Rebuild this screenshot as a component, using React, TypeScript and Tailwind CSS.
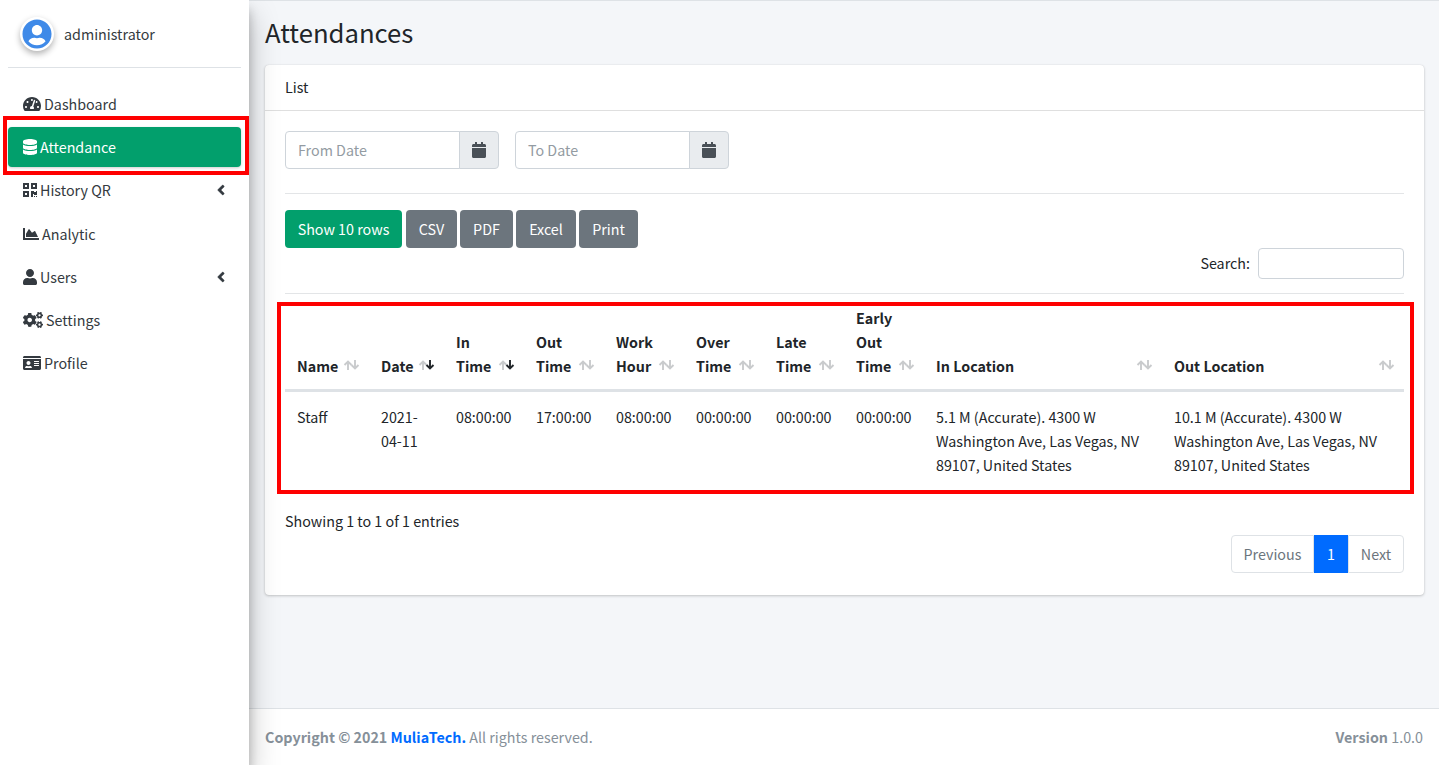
import React from "react";
import { FaTachometerAlt, FaDatabase, FaQrcode, FaChartArea, FaUser, FaCogs, FaIdCard, FaAngleLeft, FaCalendar, FaUserCircle } from "react-icons/fa";

const nav = [
  { label: "Dashboard", icon: FaTachometerAlt, w: "w-[18px]" },
  { label: "Attendance", icon: FaDatabase, active: true, w: "w-[14px]" },
  { label: "History QR", icon: FaQrcode, caret: true, w: "w-[14px]" },
  { label: "Analytic", icon: FaChartArea, w: "w-[16px]" },
  { label: "Users", icon: FaUser, caret: true, w: "w-[14px]" },
  { label: "Settings", icon: FaCogs, w: "w-[20px]" },
  { label: "Profile", icon: FaIdCard, w: "w-[18px]" },
];

const cols = [
  { l: ["Name"], w: "w-[84px]" },
  { l: ["Date"], w: "w-[75px]", sort: true },
  { l: ["In", "Time"], w: "w-[80px]", sort: true },
  { l: ["Out", "Time"], w: "w-[80px]" },
  { l: ["Work", "Hour"], w: "w-[80px]" },
  { l: ["Over", "Time"], w: "w-[80px]" },
  { l: ["Late", "Time"], w: "w-[80px]" },
  { l: ["Early", "Out", "Time"], w: "w-[80px]" },
  { l: ["In Location"], w: "w-[238px]" },
  { l: ["Out Location"], w: "w-[242px]" },
];

const row = [
  "Staff", "2021-04-11", "08:00:00", "17:00:00", "08:00:00", "00:00:00", "00:00:00", "00:00:00",
  "5.1 M (Accurate). 4300 W Washington Ave, Las Vegas, NV 89107, United States",
  "10.1 M (Accurate). 4300 W Washington Ave, Las Vegas, NV 89107, United States",
];

const buttons = [
  { l: "CSV", w: "w-[51px]" },
  { l: "PDF", w: "w-[53px]" },
  { l: "Excel", w: "w-[60px]" },
  { l: "Print", w: "w-[59px]" },
];

function SortArrows({ active }: { active?: boolean }) {
  return (
    <svg viewBox="0 0 17 10" className="absolute right-[9px] bottom-[19px] w-[17px] h-[10px]" fill="none" strokeWidth="1.9">
      <path d="M5 10V1.5M1.5 5L5 1.5L8.5 5" stroke="#c9cbcd" />
      <path d="M12 0V8.5M8.5 5L12 8.5L15.5 5" stroke={active ? "#212529" : "#c9cbcd"} />
    </svg>
  );
}

function DateInput({ ph }: { ph: string }) {
  return (
    <div className="flex w-[214px] h-[38px]">
      <div className="flex-1 flex items-center pl-3 bg-white border border-[#ced4da] rounded-l text-[#939ba2]">{ph}</div>
      <div className="w-[40px] -ml-px flex items-center justify-center bg-[#e9ecef] border border-[#ced4da] rounded-r text-[#495057]">
        <FaCalendar className="w-[14px] h-[16px]" />
      </div>
    </div>
  );
}

export default function App() {
  return (
    <div className="relative flex h-[765px] w-[1439px] overflow-hidden bg-[#f4f6f9] text-[#212529] text-[14.3px] leading-6 font-['Noto_Sans_CJK_SC','Source_Sans_Pro',sans-serif]">
      <aside className="w-[249px] shrink-0 h-full bg-white shadow-[0_14px_28px_rgba(0,0,0,0.25),0_10px_10px_rgba(0,0,0,0.22)] z-10 px-2">
        <div className="flex items-center h-[68px] border-b border-[#dee2e6] pl-[12px]">
          <div className="w-[34px] h-[34px] rounded-full bg-white shadow-[0_3px_6px_rgba(0,0,0,0.3)] flex items-center justify-center">
            <FaUserCircle className="w-[30px] h-[30px] text-[#3f8ae8]" />
          </div>
          <span className="ml-[10px] text-[#343a40]">administrator</span>
        </div>
        <nav className="pt-[16px] flex flex-col gap-[3.2px]">
          {nav.map((n) => {
            const Icon = n.icon;
            return (
              <div
                key={n.label}
                className={
                  n.active
                    ? "relative flex items-center h-[40px] pl-[15px] rounded bg-[#029f6c] text-white shadow-[0_1px_3px_rgba(0,0,0,0.2)]"
                    : "relative flex items-center h-[40px] pl-[15px] text-[#343a40]"
                }
              >
                <Icon className={`${n.w} h-[16px] mr-[3px]`} />
                <span>{n.label}</span>
                {n.caret && <FaAngleLeft stroke="currentColor" strokeWidth={12} className="absolute right-[15px] top-[12px] w-[10px] h-[16px]" />}
              </div>
            );
          })}
        </nav>
      </aside>

      <div className="flex-1 flex flex-col min-w-0 border-t border-[#dee2e6]">
        <main className="flex-1 pl-[16px] pr-[15px]">
          <h1 className="text-[25.7px] leading-[34px] font-normal h-[64px] pt-[14px]">Attendances</h1>
          <section className="bg-white rounded shadow-[0_0_1px_rgba(0,0,0,0.13),0_1px_3px_rgba(0,0,0,0.2)]">
            <header className="h-[46px] px-5 pb-[2px] flex items-center border-b border-[#dfdfdf]">List</header>
            <div className="px-5 pt-5 pb-[22px]">
              <div className="flex gap-4">
                <DateInput ph="From Date" />
                <DateInput ph="To Date" />
              </div>
              <hr className="mt-6 mb-4 border-[#e3e5e7]" />
              <div className="flex gap-[3px] text-white">
                <button className="h-[38px] w-[117px] rounded bg-[#029f6c] mr-[1px]">Show 10 rows</button>
                {buttons.map((b) => (
                  <button key={b.l} className={`h-[38px] ${b.w} rounded bg-[#6c757d]`}>{b.l}</button>
                ))}
              </div>
              <div className="flex justify-end items-center h-[31px]">
                <span className="mr-[8px] pb-[2px]">Search:</span>
                <div className="w-[146px] h-[31px] bg-white border border-[#ced4da] rounded" />
              </div>
              <hr className="mt-[14px] border-[#e3e5e7]" />
              <table className="table-fixed w-full mt-[12px] border-collapse">
                <thead>
                  <tr className="border-b-[3px] border-[#dee2e6]">
                    {cols.map((c) => (
                      <th key={c.l.join()} className={`${c.w} relative align-bottom text-left font-bold px-3 pb-[11px]`}>
                        {c.l.map((x) => <div key={x}>{x}</div>)}
                        <SortArrows active={c.sort} />
                      </th>
                    ))}
                  </tr>
                </thead>
                <tbody>
                  <tr>
                    {row.map((r) => (
                      <td key={r} className="align-top px-3 pt-[13px] pb-[12px]">{r}</td>
                    ))}
                  </tr>
                </tbody>
              </table>
              <div className="mt-[20px]">Showing 1 to 1 of 1 entries</div>
              <div className="flex justify-end mt-[2px]">
                <div className="flex h-[38px]">
                  <div className="w-[83px] flex items-center justify-center border border-[#dee2e6] rounded-l text-[#6c757d]">Previous</div>
                  <div className="w-[34px] flex items-center justify-center bg-[#006bff] text-white">1</div>
                  <div className="w-[56px] flex items-center justify-center border border-[#dee2e6] rounded-r text-[#6c757d]">Next</div>
                </div>
              </div>
            </div>
          </section>
        </main>
        <footer className="h-[57px] bg-white border-t border-[#dee2e6] flex items-center justify-between pl-[16px] pr-[16px] text-[#869099]">
          <div><b>Copyright © 2021 <span className="text-[#006bff]">MuliaTech.</span></b> All rights reserved.</div>
          <div><b>Version</b> 1.0.0</div>
        </footer>
      </div>

      <div className="absolute z-20 left-[3px] top-[116px] w-[246px] h-[59px] border-4 border-[#fe0000]" />
      <div className="absolute z-20 left-[277px] top-[302px] w-[1137px] h-[192px] border-4 border-[#fe0000]" />
    </div>
  );
}
